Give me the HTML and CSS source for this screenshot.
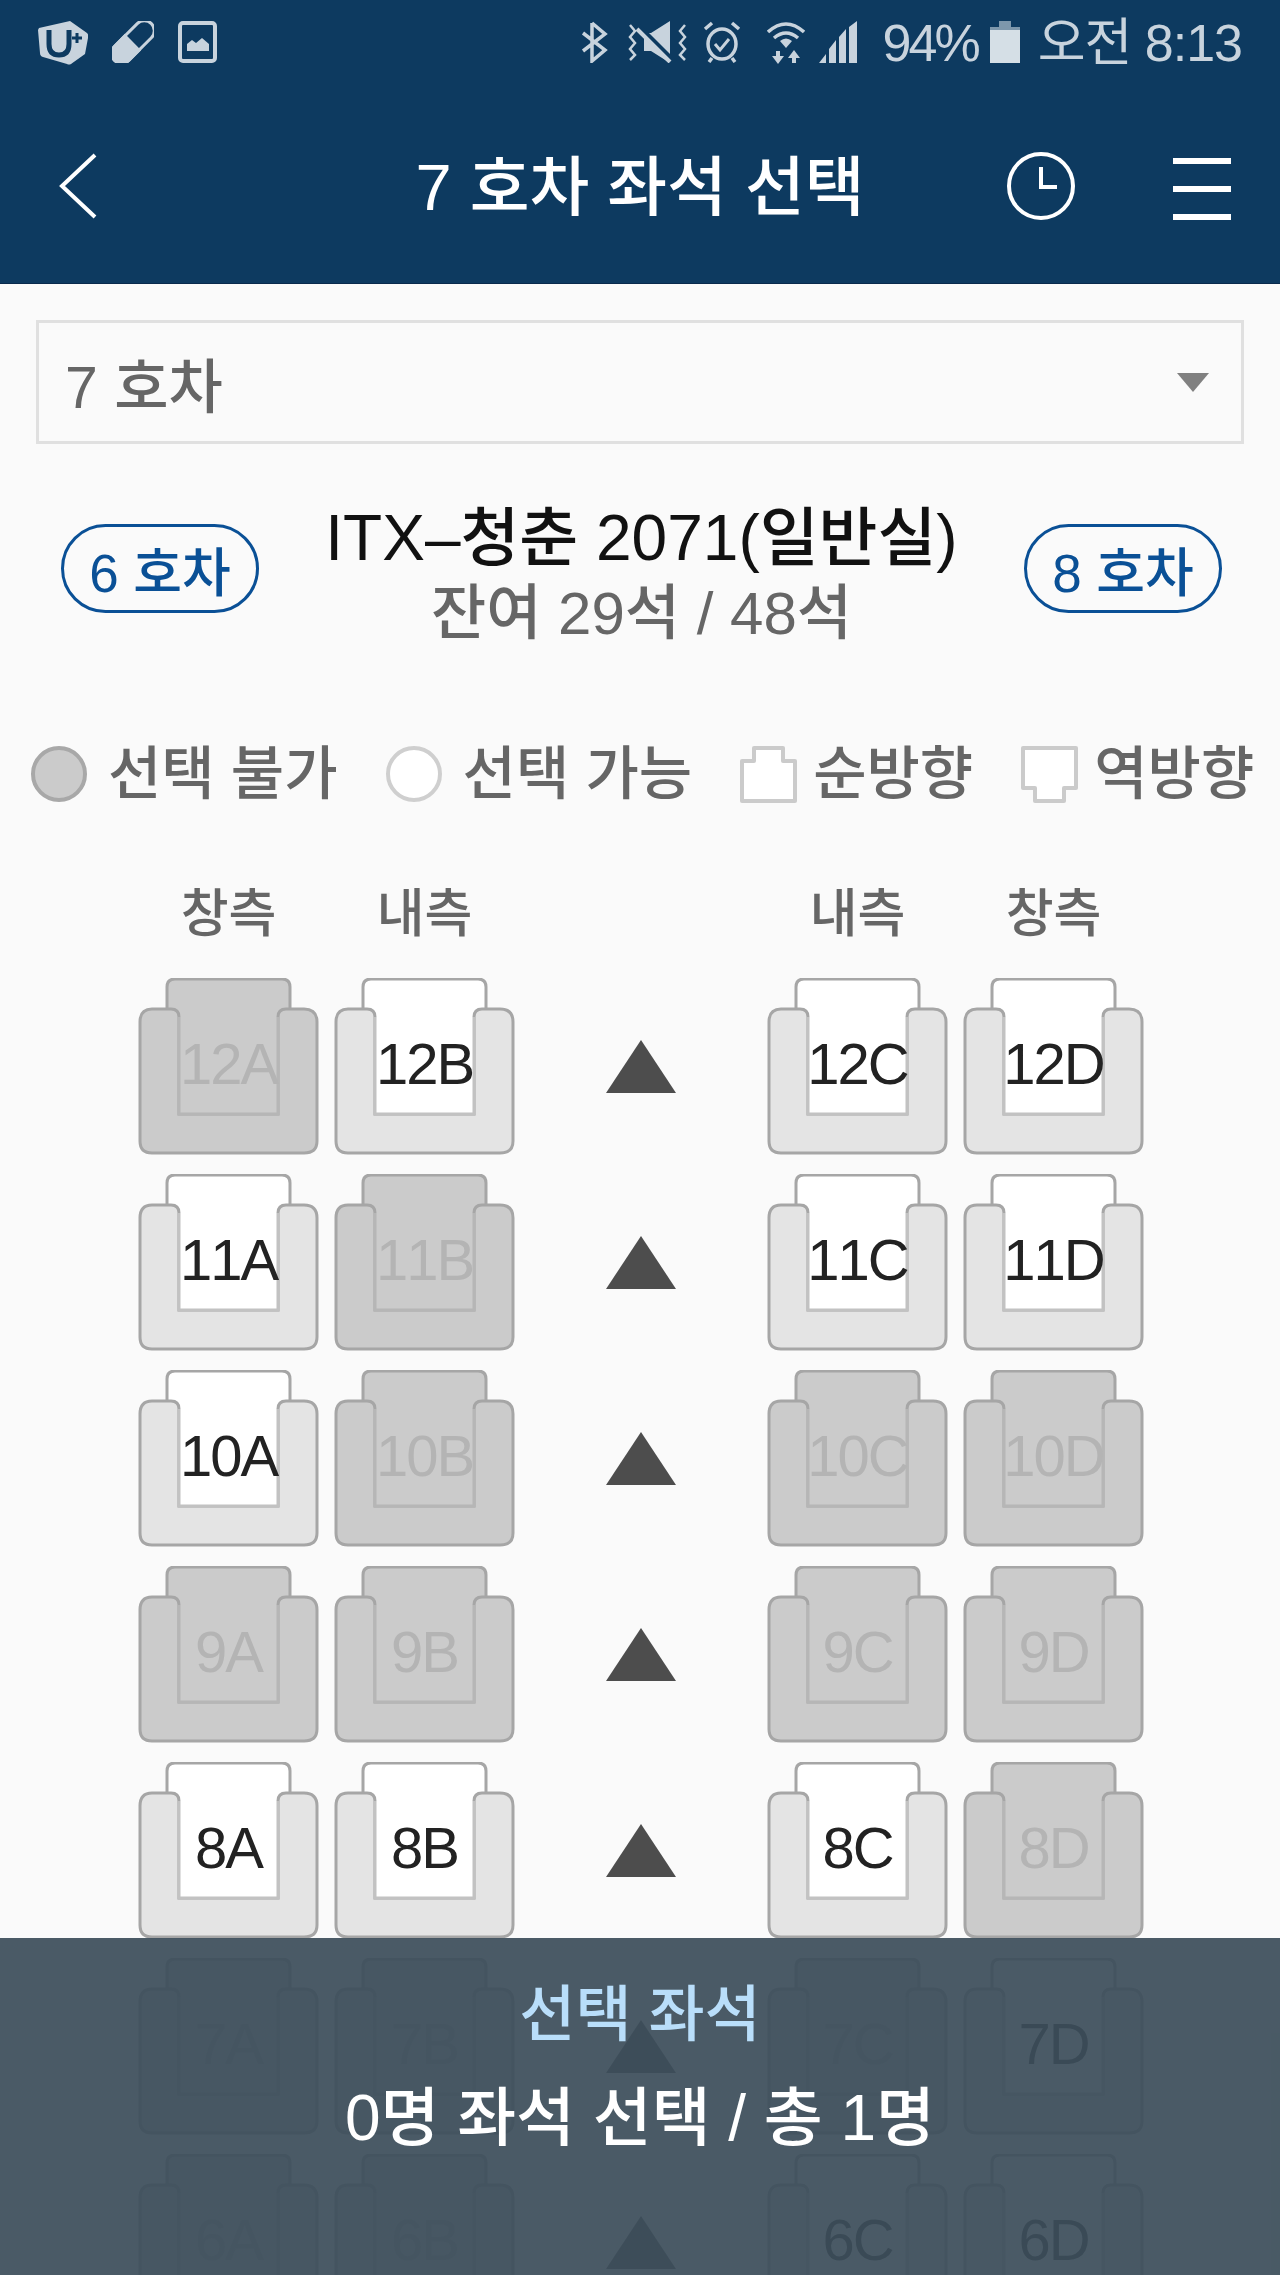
FILE: index.html
```html
<!DOCTYPE html>
<html lang="ko">
<head>
    <meta charset="UTF-8">
    <meta name="viewport" content="width=device-width, initial-scale=1.0">
    <title>7 호차 좌석 선택</title>
    <link rel="stylesheet" href="styles.css">
</head>
<body>
    <svg class="defs" width="0" height="0">
        <symbol id="seat" viewBox="0 0 181 177">
            <path class="seat-back" d="M29 70V9q0-8 8-8h107q8 0 8 8v61z" />
            <path class="seat-body" d="M14 31h19q8 0 8 8v97h99V39q0-8 8-8h18q13 0 13 13v119q0 12-13 12H14q-12 0-12-12V44q0-13 12-13z" />
            <path class="seat-well" d="M41 39v97h99V39" />
        </symbol>
    </svg>

    <div class="page">
        <header class="topbar">
            <div class="status">
                <div class="status-left">
                    <svg class="ic" width="50" height="44" viewBox="0 0 50 44">
                        <path d="M1 7l31-7 17 12q2 2 1 5l-3 16-14 10q-2 1-4 0L5 36q-3-1-3-4L0 9z" fill="#c8d3dd"/>
                        <path d="M11 9v14q0 11 10 11t10-11V9" fill="none" stroke="#0d3a60" stroke-width="5"/>
                        <path d="M34 17h10M39 12v10" fill="none" stroke="#0d3a60" stroke-width="3"/>
                    </svg>
                    <svg class="ic" width="42" height="42" viewBox="0 0 42 42">
                        <g transform="rotate(45 21 21)">
                            <rect x="11" y="-5" width="20" height="52" rx="10" fill="none" stroke="#c8d3dd" stroke-width="3"/>
                            <path d="M9.500 21h23v16a11.500 11.500 0 0 1-23 0z" fill="#c8d3dd"/>
                        </g>
                    </svg>
                    <svg class="ic" width="39" height="42" viewBox="0 0 39 42">
                        <rect x="2" y="2" width="35" height="38" rx="3" fill="none" stroke="#c8d3dd" stroke-width="4"/>
                        <path d="M9 30V23l5-4 4 3 6-5 7 6v7z" fill="#c8d3dd"/>
                    </svg>
                </div>
                <div class="status-right">
                    <svg class="ic" width="28" height="42" viewBox="0 0 28 42" fill="none" stroke="#c8d3dd" stroke-width="3.500">
                        <path d="M12 2v38l13-11L3 12M12 2l13 11L3 30"/>
                    </svg>
                    <svg class="ic ic-mute" width="63" height="42" viewBox="0 0 63 42" fill="none" stroke="#c8d3dd" stroke-width="2.500">
                        <path d="M4 4l5 6-5 6 5 6-5 6 5 6-5 5M59 4l-5 6 5 6-5 6 5 6-5 6 5 5"/>
                        <path d="M18 12h7L44 0v42L25 30h-7z" fill="#c8d3dd" stroke="none"/>
                        <path d="M12 6l36 36" stroke="#0d3a60" stroke-width="7"/>
                        <path d="M11 8l33 33" stroke-width="4"/>
                    </svg>
                    <svg class="ic ic-alarm" width="38" height="42" viewBox="0 0 38 42" fill="none" stroke="#c8d3dd" stroke-width="3.500">
                        <ellipse cx="19" cy="23" rx="14" ry="15"/>
                        <path d="M2 8l7-6M36 8l-7-6M9 37l-3 4M29 37l3 4"/>
                        <path d="M12 23l5 6 9-11" stroke-width="3"/>
                    </svg>
                    <svg class="ic ic-wifi" width="38" height="44" viewBox="0 0 38 44" fill="none" stroke="#c8d3dd" stroke-width="3.500">
                        <path d="M1 11q18-16 36 0M7 17q12-10 24 0"/>
                        <path d="M13 20q6-5 12 0l-6 7z" fill="#c8d3dd" stroke="none"/>
                        <path d="M11 30v10M27 42V32" stroke-width="4"/>
                        <path d="M5 35h12l-6 8zM21 37h12l-6-8z" fill="#c8d3dd" stroke="none"/>
                    </svg>
                    <svg class="ic ic-signal" width="44" height="42" viewBox="0 0 44 42" fill="#c8d3dd">
                        <path d="M0 42l7-9v9zM10 42V28l7-9v23zM20 42V16l7-8v34zM30 42V6l8-6v42h-8z"/>
                    </svg>
                    <span class="status-pct">94%</span>
                    <svg class="ic ic-batt" width="30" height="42" viewBox="0 0 30 42">
                        <path d="M9 0h12v6H9z" fill="#7d97ac"/>
                        <path d="M0 6h30v3H0z" fill="#7d97ac"/>
                        <path d="M0 9h30v33H0z" fill="#d5dfe6"/>
                    </svg>
                    <span class="status-clock">오전 8:13</span>
                </div>
            </div>
            <div class="navbar">
                <svg class="nav-back" width="40" height="66" viewBox="0 0 40 66" fill="none" stroke="#fff" stroke-width="4">
                    <path d="M37 2L4 33l33 31"/>
                </svg>
                <h1 class="nav-title">7 호차 좌석 선택</h1>
                <div class="nav-right">
                    <svg class="nav-clock" width="70" height="70" viewBox="0 0 70 70" fill="none" stroke="#fff" stroke-width="4">
                        <circle cx="35" cy="35" r="32"/>
                        <path d="M35 16v20h16"/>
                    </svg>
                    <div class="nav-menu"><i></i><i></i><i></i></div>
                </div>
            </div>
        </header>

        <div class="select-box">
            <span>7 호차</span>
            <i class="select-caret"></i>
        </div>

        <div class="train-row">
            <a class="car-btn">6 호차</a>
            <div class="train-info">
                <div class="train-name">ITX–청춘 2071(일반실)</div>
                <div class="train-left">잔여 29석 / 48석</div>
            </div>
            <a class="car-btn">8 호차</a>
        </div>

        <div class="legend">
            <div class="legend-item"><i class="dot dot-off"></i>선택 불가</div>
            <div class="legend-item"><i class="dot"></i>선택 가능</div>
            <div class="legend-item">
                <svg width="57" height="57" viewBox="0 0 57 57" fill="#fff" stroke="#cbcbcb" stroke-width="4" stroke-linejoin="round">
                    <path d="M14 15V2h29v13h12v40H2V15z"/>
                </svg>순방향
            </div>
            <div class="legend-item">
                <svg width="57" height="57" viewBox="0 0 57 57" fill="#fff" stroke="#cbcbcb" stroke-width="4" stroke-linejoin="round">
                    <path d="M2 2h53v40H43v13H14V42H2z"/>
                </svg>역방향
            </div>
        </div>

        <div class="seat-head">
            <span>창측</span><span>내측</span><b></b><span>내측</span><span>창측</span>
        </div>

        <div class="seats">
            <div class="seat off"><svg><use href="#seat"/></svg><span>12A</span></div>
            <div class="seat"><svg><use href="#seat"/></svg><span>12B</span></div>
            <i class="aisle"></i>
            <div class="seat"><svg><use href="#seat"/></svg><span>12C</span></div>
            <div class="seat"><svg><use href="#seat"/></svg><span>12D</span></div>

            <div class="seat"><svg><use href="#seat"/></svg><span>11A</span></div>
            <div class="seat off"><svg><use href="#seat"/></svg><span>11B</span></div>
            <i class="aisle"></i>
            <div class="seat"><svg><use href="#seat"/></svg><span>11C</span></div>
            <div class="seat"><svg><use href="#seat"/></svg><span>11D</span></div>

            <div class="seat"><svg><use href="#seat"/></svg><span>10A</span></div>
            <div class="seat off"><svg><use href="#seat"/></svg><span>10B</span></div>
            <i class="aisle"></i>
            <div class="seat off"><svg><use href="#seat"/></svg><span>10C</span></div>
            <div class="seat off"><svg><use href="#seat"/></svg><span>10D</span></div>

            <div class="seat off"><svg><use href="#seat"/></svg><span>9A</span></div>
            <div class="seat off"><svg><use href="#seat"/></svg><span>9B</span></div>
            <i class="aisle"></i>
            <div class="seat off"><svg><use href="#seat"/></svg><span>9C</span></div>
            <div class="seat off"><svg><use href="#seat"/></svg><span>9D</span></div>

            <div class="seat"><svg><use href="#seat"/></svg><span>8A</span></div>
            <div class="seat"><svg><use href="#seat"/></svg><span>8B</span></div>
            <i class="aisle"></i>
            <div class="seat"><svg><use href="#seat"/></svg><span>8C</span></div>
            <div class="seat off"><svg><use href="#seat"/></svg><span>8D</span></div>

            <div class="seat off"><svg><use href="#seat"/></svg><span>7A</span></div>
            <div class="seat off"><svg><use href="#seat"/></svg><span>7B</span></div>
            <i class="aisle"></i>
            <div class="seat off"><svg><use href="#seat"/></svg><span>7C</span></div>
            <div class="seat"><svg><use href="#seat"/></svg><span>7D</span></div>

            <div class="seat off"><svg><use href="#seat"/></svg><span>6A</span></div>
            <div class="seat off"><svg><use href="#seat"/></svg><span>6B</span></div>
            <i class="aisle"></i>
            <div class="seat"><svg><use href="#seat"/></svg><span>6C</span></div>
            <div class="seat"><svg><use href="#seat"/></svg><span>6D</span></div>
        </div>

        <div class="summary">
            <div class="summary-title">선택 좌석</div>
            <div class="summary-count">0명 좌석 선택 / 총 1명</div>
        </div>
    </div>
</body>
</html>
```

FILE: styles.css
```css
* {
    box-sizing: border-box;
}

html, body {
    margin: 0;
    padding: 0;
}

body {
    font-family: "Liberation Sans", "Noto Sans CJK KR", sans-serif;
    font-weight: 500;
    background-color: #fafafa;
}

.defs {
    position: absolute;
}

.page {
    position: relative;
    height: 2275px;
    overflow: hidden;
}

/* top bar */
.topbar {
    height: 284px;
    background-color: #0d3a60;
    border-bottom: 1px solid #0a2a4c;
}

.status {
    height: 84px;
    padding: 21px 38px 0;
    display: flex;
    justify-content: space-between;
    align-items: flex-start;
}

.status-left, .status-right {
    display: flex;
    align-items: flex-start;
}

.status-left {
    gap: 24px;
}

.status-right {
    color: #c8d3dd;
    font-size: 52px;
    font-weight: 400;
    line-height: 44px;
}

.ic {
    display: block;
}

.ic-mute {
    margin-left: 18px;
}

.ic-alarm {
    margin-left: 14px;
}

.ic-wifi {
    margin-left: 26px;
}

.ic-signal {
    margin-left: 14px;
}

.status-pct {
    margin-left: 20px;
    letter-spacing: -3px;
}

.ic-batt {
    margin-left: 12px;
}

.status-clock {
    margin-left: 18px;
    letter-spacing: -1px;
}

.navbar {
    height: 199px;
    padding: 4px 49px 0;
    display: grid;
    grid-template-columns: 1fr auto 1fr;
    align-items: center;
}

.nav-back {
    margin-left: 9px;
}

.nav-title {
    margin: 0;
    padding-top: 5px;
    color: #fff;
    font-size: 65px;
    font-weight: 500;
    line-height: 70px;
}

.nav-right {
    display: flex;
    justify-content: flex-end;
    align-items: center;
}

.nav-clock {
    margin-right: 97px;
}

.nav-menu {
    width: 58px;
    height: 62px;
    margin-top: 6px;
    display: flex;
    flex-direction: column;
    justify-content: space-between;
}

.nav-menu i {
    display: block;
    height: 6px;
    background-color: #fff;
}

/* car select */
.select-box {
    margin: 36px 36px 0;
    height: 124px;
    padding: 0 32px 0 26px;
    display: flex;
    justify-content: space-between;
    align-items: center;
    border: 3px solid #e0e0e0;
    color: #666;
    font-size: 59px;
}

.select-caret {
    width: 0;
    height: 0;
    border-left: 16px solid transparent;
    border-right: 16px solid transparent;
    border-top: 19px solid #808080;
}

.train-row {
    margin-top: 56px;
    padding: 0 58px 0 61px;
    display: flex;
    justify-content: space-between;
    align-items: flex-start;
}

.car-btn {
    width: 198px;
    height: 89px;
    margin-top: 24px;
    display: flex;
    justify-content: center;
    align-items: center;
    border: 3px solid #0a5096;
    border-radius: 45px;
    color: #0a5096;
    font-size: 53px;
}

.train-info {
    text-align: center;
}

.train-name {
    color: #111;
    font-size: 64px;
    line-height: 76px;
}

.train-left {
    color: #666;
    font-size: 60px;
    line-height: 76px;
}

/* legend */
.legend {
    margin-top: 91px;
    padding-left: 31px;
    display: flex;
    color: #666;
    font-size: 58px;
    line-height: 62px;
}

.legend-item {
    display: flex;
    align-items: center;
    gap: 21px;
    margin-right: 48px;
    white-space: nowrap;
}

.legend-item svg {
    margin-right: -5px;
}

.dot {
    width: 56px;
    height: 56px;
    border: 4px solid #cfcfcf;
    border-radius: 50%;
    background-color: #fff;
}

.dot-off {
    border-color: #a8a8a8;
    background-color: #cbcbcb;
}

/* seat map */
.seat-head {
    margin-top: 79px;
    display: grid;
    grid-template-columns: 181px 181px 222px 181px 181px;
    column-gap: 15px;
    padding-left: 138px;
    color: #666;
    font-size: 52px;
    line-height: 60px;
    text-align: center;
}

.seats {
    margin-top: 34px;
    display: grid;
    grid-template-columns: 181px 181px 222px 181px 181px;
    grid-auto-rows: 177px;
    gap: 19px 15px;
    padding-left: 138px;
}

.seat {
    --back: #fff;
    --body: #e4e4e4;
    --line: #a6a6a6;
    --well: #c2c2c2;
    position: relative;
    color: #222;
}

.seat.off {
    --back: #cbcbcb;
    --body: #cbcbcb;
    --line: #a6a6a6;
    --well: #b6b6b6;
    color: #b4b4b4;
}

.seat svg {
    display: block;
    width: 181px;
    height: 177px;
}

.seat-back {
    fill: var(--back);
    stroke: var(--line);
    stroke-width: 3;
}

.seat-body {
    fill: var(--body);
    stroke: var(--line);
    stroke-width: 3;
}

.seat-well {
    fill: var(--back);
    stroke: var(--well);
    stroke-width: 3;
}

.seat span {
    position: absolute;
    left: 0;
    right: 0;
    top: 46px;
    font-size: 58px;
    font-weight: 400;
    font-kerning: none;
    letter-spacing: -2px;
    line-height: 80px;
    text-align: center;
}

.aisle {
    width: 70px;
    height: 53px;
    margin: 62px auto 0;
    background-color: #4d4d4d;
    clip-path: polygon(50% 0, 100% 100%, 0 100%);
}

/* bottom summary over the seats */
.summary {
    position: absolute;
    left: 0;
    right: 0;
    bottom: 0;
    height: 337px;
    padding-top: 42px;
    background-color: rgba(60, 78, 90, 0.93);
    text-align: center;
}

.summary-title {
    color: #b9defa;
    font-size: 61px;
    line-height: 70px;
}

.summary-count {
    margin-top: 33px;
    color: #fff;
    font-size: 64px;
    line-height: 70px;
}
```
